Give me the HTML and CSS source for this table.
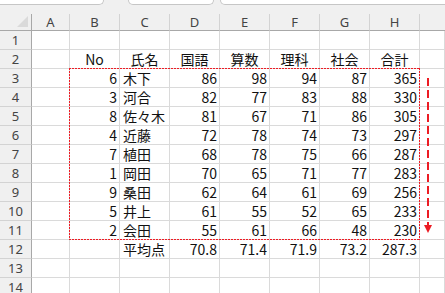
FILE: index.html
```html
<!DOCTYPE html>
<html lang="ja">
<head>
<meta charset="utf-8">
<link rel="stylesheet" href="styles.css">
</head>
<body>
<div class="topbar">
  <div class="tb tb1"></div>
  <div class="tb tb2"></div>
  <div class="tb tb3"></div>
</div>
<div class="sheet">
  <div class="grid">
    <div class="ch corner"><span class="tri"></span></div>
    <div class="ch">A</div><div class="ch">B</div><div class="ch">C</div><div class="ch">D</div><div class="ch">E</div><div class="ch">F</div><div class="ch">G</div><div class="ch">H</div><div class="ch last"></div>

    <div class="rh">1</div><div class="c"></div><div class="c"></div><div class="c"></div><div class="c"></div><div class="c"></div><div class="c"></div><div class="c"></div><div class="c"></div><div class="c"></div>

    <div class="rh">2</div><div class="c"></div><div class="c ctr">No</div><div class="c ctr">氏名</div><div class="c ctr">国語</div><div class="c ctr">算数</div><div class="c ctr">理科</div><div class="c ctr">社会</div><div class="c ctr">合計</div><div class="c"></div>

    <div class="rh">3</div><div class="c"></div><div class="c n">6</div><div class="c t">木下</div><div class="c n">86</div><div class="c n">98</div><div class="c n">94</div><div class="c n">87</div><div class="c n">365</div><div class="c"></div>
    <div class="rh">4</div><div class="c"></div><div class="c n">3</div><div class="c t">河合</div><div class="c n">82</div><div class="c n">77</div><div class="c n">83</div><div class="c n">88</div><div class="c n">330</div><div class="c"></div>
    <div class="rh">5</div><div class="c"></div><div class="c n">8</div><div class="c t">佐々木</div><div class="c n">81</div><div class="c n">67</div><div class="c n">71</div><div class="c n">86</div><div class="c n">305</div><div class="c"></div>
    <div class="rh">6</div><div class="c"></div><div class="c n">4</div><div class="c t">近藤</div><div class="c n">72</div><div class="c n">78</div><div class="c n">74</div><div class="c n">73</div><div class="c n">297</div><div class="c"></div>
    <div class="rh">7</div><div class="c"></div><div class="c n">7</div><div class="c t">植田</div><div class="c n">68</div><div class="c n">78</div><div class="c n">75</div><div class="c n">66</div><div class="c n">287</div><div class="c"></div>
    <div class="rh">8</div><div class="c"></div><div class="c n">1</div><div class="c t">岡田</div><div class="c n">70</div><div class="c n">65</div><div class="c n">71</div><div class="c n">77</div><div class="c n">283</div><div class="c"></div>
    <div class="rh">9</div><div class="c"></div><div class="c n">9</div><div class="c t">桑田</div><div class="c n">62</div><div class="c n">64</div><div class="c n">61</div><div class="c n">69</div><div class="c n">256</div><div class="c"></div>
    <div class="rh">10</div><div class="c"></div><div class="c n">5</div><div class="c t">井上</div><div class="c n">61</div><div class="c n">55</div><div class="c n">52</div><div class="c n">65</div><div class="c n">233</div><div class="c"></div>
    <div class="rh">11</div><div class="c"></div><div class="c n">2</div><div class="c t">会田</div><div class="c n">55</div><div class="c n">61</div><div class="c n">66</div><div class="c n">48</div><div class="c n">230</div><div class="c"></div>
    <div class="rh">12</div><div class="c"></div><div class="c"></div><div class="c t">平均点</div><div class="c n">70.8</div><div class="c n">71.4</div><div class="c n">71.9</div><div class="c n">73.2</div><div class="c n">287.3</div><div class="c"></div>
    <div class="rh">13</div><div class="c"></div><div class="c"></div><div class="c"></div><div class="c"></div><div class="c"></div><div class="c"></div><div class="c"></div><div class="c"></div><div class="c"></div>
    <div class="rh">14</div><div class="c"></div><div class="c"></div><div class="c"></div><div class="c"></div><div class="c"></div><div class="c"></div><div class="c"></div><div class="c"></div><div class="c"></div>
  </div>
  <div class="marquee"></div>
  <svg class="arrow" width="12" height="160" viewBox="0 0 12 160">
    <line x1="6" y1="0" x2="6" y2="148" stroke="#ec1c24" stroke-width="2" stroke-dasharray="8 4"/>
    <polygon points="2,147 10,147 6,155" fill="#ec1c24"/>
  </svg>
</div>
</body>
</html>
```
FILE: styles.css
```css
html, body {
  margin: 0;
  padding: 0;
  background: #ffffff;
  overflow: hidden;
}
body {
  width: 445px;
  height: 293px;
}
.topbar {
  height: 14px;
  background: #f0f0f0;
  display: flex;
  align-items: flex-start;
}
.tb {
  height: 5px;
  box-sizing: border-box;
  background: #ffffff;
  border: 1px solid #c6c6c6;
  border-top: none;
  border-radius: 0 0 5px 5px;
}
.tb1 {
  width: 108px;
  margin-left: -4px;
}
.tb2 {
  width: 86px;
  margin-left: 24px;
}
.tb3 {
  flex: 1;
  margin-left: 6px;
  margin-right: -8px;
  border-radius: 0 0 0 5px;
}
.sheet {
  position: relative;
}
.grid {
  display: grid;
  grid-template-columns: 32px 38px repeat(7, 50px) 1fr;
  grid-template-rows: 17px repeat(14, 19px);
}
.grid > div {
  box-sizing: border-box;
  overflow: hidden;
  white-space: nowrap;
}
.ch {
  background: #f0f0f0;
  border-right: 1px solid #d3d3d3;
  border-bottom: 1px solid #a8a8a8;
  font-family: "Noto Sans", "DejaVu Sans", sans-serif;
  font-size: 13px;
  line-height: 16px;
  color: #444444;
  text-align: center;
}
.ch.corner {
  border-right: 1px solid #a8a8a8;
  position: relative;
}
.tri {
  position: absolute;
  right: 3px;
  bottom: 3px;
  width: 0;
  height: 0;
  border-left: 11px solid transparent;
  border-bottom: 11px solid #dadada;
}
.ch.last {
  border-right: none;
}
.rh {
  background: #f0f0f0;
  border-right: 1px solid #a8a8a8;
  border-bottom: 1px solid #d3d3d3;
  font-family: "Noto Sans", "DejaVu Sans", sans-serif;
  font-size: 13px;
  line-height: 19px;
  color: #444444;
  text-align: center;
}
.c {
  border-right: 1px solid #dadada;
  border-bottom: 1px solid #dadada;
  font-family: "Noto Sans CJK JP", "Noto Sans", sans-serif;
  font-size: 14px;
  line-height: 18px;
  color: #111111;
}
.c.n {
  text-align: right;
  padding-right: 2px;
}
.c.t {
  text-align: left;
  padding-left: 3px;
}
.c.ctr {
  text-align: center;
}
.marquee {
  position: absolute;
  left: 69px;
  top: 54px;
  width: 351px;
  height: 172px;
  pointer-events: none;
  background:
    repeating-linear-gradient(90deg, #ee1c24 0 2px, transparent 2px 3px) left top / 100% 1px no-repeat,
    repeating-linear-gradient(90deg, #ee1c24 0 2px, transparent 2px 3px) left bottom / 100% 1px no-repeat,
    repeating-linear-gradient(180deg, #ee1c24 0 2px, transparent 2px 3px) left top / 1px 100% no-repeat,
    repeating-linear-gradient(180deg, #ee1c24 0 2px, transparent 2px 3px) right top / 1px 100% no-repeat;
}
.arrow {
  position: absolute;
  left: 422px;
  top: 64px;
  pointer-events: none;
}
```
